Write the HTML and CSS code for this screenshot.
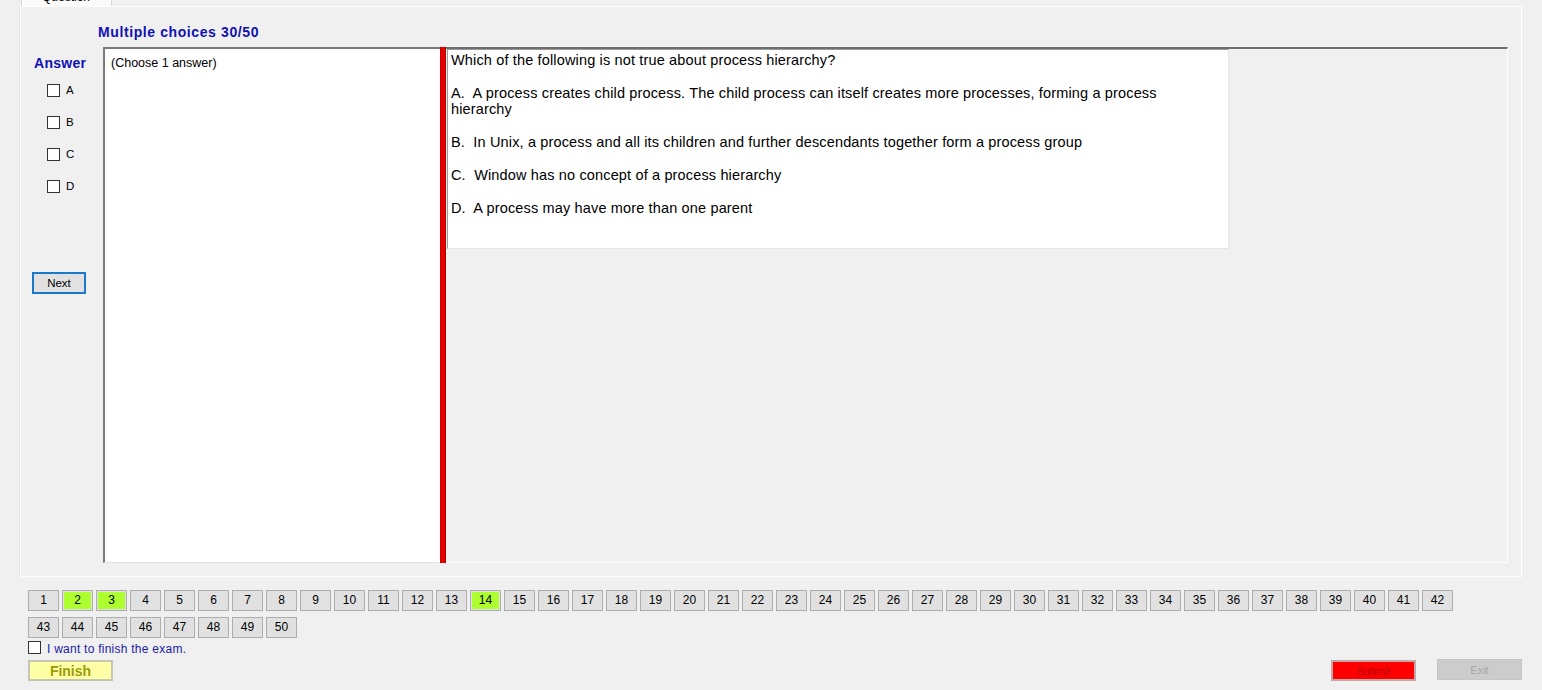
FILE: index.html
```html
<!DOCTYPE html>
<html>
<head>
<meta charset="utf-8">
<title>Exam</title>
<link rel="stylesheet" href="styles.css">
</head>
<body>
<div class="tabstrip"><div class="tab"><span class="tab-label">Question</span></div></div>
<div class="panel">
  <div class="title">Multiple choices 30/50</div>
  <div class="content">
    <div class="leftcol">
      <div class="answer">Answer</div>
      <div class="opts">
        <label class="opt"><span class="cb"></span><span>A</span></label>
        <label class="opt"><span class="cb"></span><span>B</span></label>
        <label class="opt"><span class="cb"></span><span>C</span></label>
        <label class="opt"><span class="cb"></span><span>D</span></label>
      </div>
      <button class="next">Next</button>
    </div>
    <div class="choosebox">(Choose 1 answer)</div>
    <div class="redbar"></div>
    <div class="qframe">
      <div class="qbox">
        <p>Which of the following is not true about process hierarchy?</p>
        <p>A.  A process creates child process. The child process can itself creates more processes, forming a process<br>hierarchy</p>
        <p>B.  In Unix, a process and all its children and further descendants together form a process group</p>
        <p>C.  Window has no concept of a process hierarchy</p>
        <p>D.  A process may have more than one parent</p>
      </div>
    </div>
  </div>
</div>
<div class="bottom">
  <div class="nums">
    <span class="num">1</span><span class="num done">2</span><span class="num done">3</span><span class="num">4</span><span class="num">5</span><span class="num">6</span><span class="num">7</span><span class="num">8</span><span class="num">9</span><span class="num">10</span><span class="num">11</span><span class="num">12</span><span class="num">13</span><span class="num done">14</span><span class="num">15</span><span class="num">16</span><span class="num">17</span><span class="num">18</span><span class="num">19</span><span class="num">20</span><span class="num">21</span><span class="num">22</span><span class="num">23</span><span class="num">24</span><span class="num">25</span><span class="num">26</span><span class="num">27</span><span class="num">28</span><span class="num">29</span><span class="num">30</span><span class="num">31</span><span class="num">32</span><span class="num">33</span><span class="num">34</span><span class="num">35</span><span class="num">36</span><span class="num">37</span><span class="num">38</span><span class="num">39</span><span class="num">40</span><span class="num">41</span><span class="num">42</span><span class="num">43</span><span class="num">44</span><span class="num">45</span><span class="num">46</span><span class="num">47</span><span class="num">48</span><span class="num">49</span><span class="num">50</span>
  </div>
  <label class="finishcheck"><span class="cb"></span><span class="fc-text">I want to finish the exam.</span></label>
  <div class="actions">
    <button class="finish">Finish</button>
    <button class="submit">Submit</button>
    <button class="exit">Exit</button>
  </div>
</div>
</body>
</html>
```
FILE: styles.css
```css
html, body {
  margin: 0;
  padding: 0;
  background: #f0f0f0;
  font-family: "Liberation Sans", Arial, sans-serif;
  color: #000;
  width: 1542px;
  height: 690px;
  overflow: hidden;
}

.tabstrip {
  height: 6px;
  display: flex;
}
.tab {
  margin-left: 21px;
  width: 89px;
  height: 6px;
  background: #fbfbfb;
  border-left: 1px solid #dadada;
  border-right: 1px solid #dadada;
  overflow: hidden;
  font-size: 12px;
}
.tab-label {
  display: block;
  margin-top: -10px;
  margin-left: 20px;
  line-height: 14px;
  color: #000;
}

.panel {
  margin-left: 20px;
  width: 1502px;
  height: 571px;
  box-sizing: border-box;
  border: 1px solid #fdfdfd;
  box-shadow: -1px 0 0 #e3e3e3;
  background: #f0f0f0;
  display: flex;
  flex-direction: column;
}

.title {
  margin-left: 77px;
  margin-top: 17px;
  height: 16px;
  line-height: 16px;
  font-size: 14px;
  letter-spacing: 0.6px;
  font-weight: bold;
  color: #1010b4;
  margin-bottom: 7px;
}

.content {
  display: flex;
  height: 516px;
}

.leftcol {
  width: 82px;
  display: flex;
  flex-direction: column;
  align-items: flex-start;
}
.answer {
  margin-top: 8px;
  margin-left: 13px;
  line-height: 16px;
  font-size: 14px;
  letter-spacing: 0.3px;
  font-weight: bold;
  color: #1010b4;
}
.opts {
  margin-top: 3px;
  margin-left: 26px;
  display: flex;
  flex-direction: column;
}
.opt {
  height: 32px;
  display: flex;
  align-items: center;
  gap: 6px;
  font-size: 11.5px;
}
.cb {
  display: inline-block;
  width: 11px;
  height: 11px;
  border: 1px solid #333;
  background: #fff;
}
.next {
  margin-top: 70px;
  margin-left: 11px;
  width: 54px;
  height: 22px;
  box-sizing: border-box;
  border: 2px solid #1979ca;
  background: #e1e1e1;
  font-family: "Liberation Sans", Arial, sans-serif;
  font-size: 11.5px;
  padding: 0;
  color: #000;
}

.choosebox {
  width: 337px;
  box-sizing: border-box;
  background: #fff;
  border-top: 2px solid #7a7a7a;
  border-left: 2px solid #7a7a7a;
  border-bottom: 1px solid #e3e3e3;
  padding: 6px 0 0 6px;
  font-size: 12.5px;
  line-height: 16px;
}

.redbar {
  width: 6px;
  box-sizing: border-box;
  background: #e60000;
  border-left: 1px solid #c20000;
  border-right: 1px solid #a40000;
}

.qframe {
  width: 1062px;
  box-sizing: border-box;
  border-top: 2px solid #6e6e6e;
  border-right: 1px solid #fdfdfd;
  border-bottom: 1px solid #fdfdfd;
  padding-left: 1px;
}
.qbox {
  width: 782px;
  height: 200px;
  box-sizing: border-box;
  background: #fff;
  border-top: 1px solid #9a9a9a;
  border-left: 1px solid #9a9a9a;
  border-right: 1px solid #e6e6e6;
  border-bottom: 1px solid #e6e6e6;
  padding: 2px 3px;
  font-size: 14.5px;
  letter-spacing: 0.15px;
  line-height: 16px;
}
.qbox p {
  margin: 0 0 17px 0;
  white-space: pre-wrap;
}

.bottom {
  padding-left: 28px;
  padding-top: 13px;
}
.nums {
  display: grid;
  grid-template-columns: repeat(42, 31px);
  column-gap: 3px;
  row-gap: 6px;
}
.num {
  height: 21px;
  box-sizing: border-box;
  border: 1px solid #adadad;
  background: #e1e1e1;
  font-size: 12px;
  line-height: 18px;
  text-align: center;
}
.num.done {
  background: #adff2f;
  box-shadow: inset 0 0 0 1px #e1e1e1;
}

.finishcheck {
  margin-top: 2px;
  height: 14px;
  display: flex;
  align-items: flex-start;
  gap: 6px;
  font-size: 12px;
  letter-spacing: 0.25px;
  color: #1a1aa8;
}
.finishcheck .cb {
  margin-top: 1px;
}
.fc-text {
  margin-top: 2px;
  line-height: 14px;
}

.actions {
  margin-top: 6px;
  width: 1494px;
  display: flex;
  align-items: flex-start;
}
.actions button {
  width: 85px;
  height: 21px;
  box-sizing: border-box;
  padding: 0;
  font-family: "Liberation Sans", Arial, sans-serif;
}
.finish {
  border: 2px solid #c6c6b4;
  background: #ffffa6;
  color: #9b9b0a;
  font-size: 14px;
  font-weight: bold;
}
.submit {
  margin-left: auto;
  border: 2px solid #c4a8a8;
  background: #ff0000;
  color: #b40000;
  font-size: 11px;
}
.exit {
  margin-left: 21px;
  margin-top: -1px;
  border: 1px solid #c6c6c6;
  background: #cccccc;
  color: #a6a6a6;
  font-size: 11px;
}
```
